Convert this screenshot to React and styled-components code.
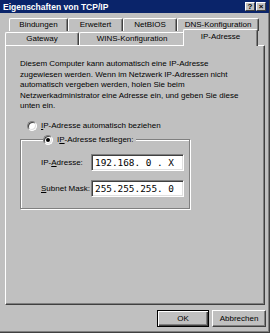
import React from 'react';
import styled, { createGlobalStyle } from 'styled-components';

const GlobalStyle = createGlobalStyle`
  body {
    margin: 0;
    background: #c0c0c0;
    font-family: "Liberation Sans", Arial, sans-serif;
  }
`;

const Window = styled.div`
  width: 270px;
  height: 333px;
  box-sizing: border-box;
  background: #c0c0c0;
  border-right: 1px solid #404040;
  border-bottom: 1px solid #404040;
  box-shadow: inset -1px -1px #808080;
  display: flex;
  flex-direction: column;
`;

const TitleBar = styled.div`
  height: 14px;
  background: #0a246a;
  color: #fff;
  display: flex;
  align-items: center;
  justify-content: space-between;
  padding: 0 3px;
  font-weight: bold;
  font-size: 8.5px;
`;

const TitleButtons = styled.div`
  display: flex;
  gap: 1px;
`;

const TitleButton = styled.div`
  width: 10px;
  height: 9px;
  box-sizing: border-box;
  background: #c0c0c0;
  border-top: 1px solid #fff;
  border-left: 1px solid #fff;
  border-right: 1px solid #404040;
  border-bottom: 1px solid #404040;
  color: #000;
  font-size: 8px;
  font-weight: bold;
  line-height: 7px;
  text-align: center;
`;

const Body = styled.div`
  flex: 1;
  display: flex;
  flex-direction: column;
  padding: 5px 4px 5px 5px;
`;

const TabRow = styled.div`
  display: flex;
  align-items: flex-end;
  height: ${p => p.$h}px;
  padding-left: ${p => p.$indent}px;
`;

const Tab = styled.div`
  position: relative;
  z-index: ${p => (p.$selected ? 2 : 1)};
  width: ${p => p.$w}px;
  height: ${p => (p.$selected ? 17 : 13)}px;
  margin: 0 ${p => (p.$selected ? -2 : 0)}px ${p => (p.$selected ? -1 : 0)}px;
  box-sizing: border-box;
  background: #c0c0c0;
  border-top: 1px solid #fff;
  border-left: 1px solid #fff;
  border-right: 1px solid #404040;
  border-radius: 2px 2px 0 0;
  box-shadow: inset -1px 0 #808080;
  font-size: 8px;
  line-height: 11px;
  padding-top: ${p => (p.$selected ? 1 : 0)}px;
  text-align: center;
  color: #000;
  white-space: nowrap;
`;

const Panel = styled.div`
  height: 260px;
  box-sizing: border-box;
  border-top: 1px solid #fff;
  border-left: 1px solid #fff;
  border-right: 1px solid #404040;
  border-bottom: 1px solid #404040;
  box-shadow: inset -1px -1px #808080;
  padding: 13px 14px;
  font-size: 8px;
  color: #000;
`;

const Intro = styled.p`
  margin: 0;
  line-height: 10.5px;
`;

const RadioRow = styled.label`
  display: flex;
  align-items: center;
  gap: 4px;
  height: 12px;
  margin: ${p => p.$mt || 0}px 0 0 ${p => p.$ml || 0}px;
  background: #c0c0c0;
`;

const RadioDot = styled.span`
  width: 10px;
  height: 10px;
  box-sizing: border-box;
  border-radius: 50%;
  background: #fff;
  border: 1px solid;
  border-color: #808080 #fff #fff #808080;
  box-shadow: inset 1px 1px #404040, inset -1px -1px #dfdfdf;
  display: flex;
  align-items: center;
  justify-content: center;
  &::after {
    content: '';
    width: 4px;
    height: 4px;
    border-radius: 50%;
    background: ${p => (p.$checked ? '#000' : 'transparent')};
  }
`;

const Group = styled.fieldset`
  width: 170px;
  height: 75px;
  box-sizing: border-box;
  margin: 2px 0 0 0;
  padding: 8px 0 0 20px;
  border: 1px solid #808080;
  box-shadow: inset 1px 1px #fff, 1px 1px #fff;
`;

const Legend = styled.legend`
  padding: 0 2px 0 0;
  margin-left: 2px;
  background: #c0c0c0;
`;

const FieldGrid = styled.div`
  display: grid;
  grid-template-columns: 50px 93px;
  row-gap: 9px;
  align-items: center;
`;

const Input = styled.div`
  height: 17px;
  box-sizing: border-box;
  background: #fff;
  border: 1px solid;
  border-color: #808080 #fff #fff #808080;
  box-shadow: inset 1px 1px #404040, inset -1px -1px #dfdfdf;
  font-family: "DejaVu Sans Mono", "Liberation Mono", monospace;
  font-size: 9.4px;
  line-height: 15px;
  padding-left: 3px;
  white-space: pre;
  overflow: hidden;
`;

const ButtonRow = styled.div`
  display: flex;
  justify-content: flex-end;
  gap: 3px;
  margin-top: 5px;
  margin-right: -1px;
`;

const Button = styled.button`
  width: ${p => p.$w}px;
  height: 17px;
  box-sizing: border-box;
  padding: 0;
  background: #c0c0c0;
  font-family: "Liberation Sans", Arial, sans-serif;
  font-size: 8px;
  color: #000;
  border: 1px solid;
  border-color: ${p => (p.$default ? '#000' : '#fff #404040 #404040 #fff')};
  box-shadow: ${p =>
    p.$default
      ? 'inset 1px 1px #fff, inset -1px -1px #404040, inset -2px -2px #808080'
      : 'inset -1px -1px #808080'};
`;

const tabsBack = [
  { label: 'Bindungen', w: 59 },
  { label: 'Erweitert', w: 55 },
  { label: 'NetBIOS', w: 54 },
  { label: 'DNS-Konfiguration', w: 82 },
];

const tabsFront = [
  { label: 'Gateway', w: 74 },
  { label: 'WINS-Konfiguration', w: 106 },
  { label: 'IP-Adresse', w: 75, selected: true },
];

export default function App() {
  return (
    <>
      <GlobalStyle />
      <Window>
        <TitleBar>
          <span>Eigenschaften von TCP/IP</span>
          <TitleButtons>
            <TitleButton>?</TitleButton>
            <TitleButton>×</TitleButton>
          </TitleButtons>
        </TitleBar>
        <Body>
          <TabRow $h={13} $indent={4}>
            {tabsBack.map(t => (
              <Tab key={t.label} $w={t.w}>{t.label}</Tab>
            ))}
          </TabRow>
          <TabRow $h={14} $indent={0}>
            {tabsFront.map(t => (
              <Tab key={t.label} $w={t.w} $selected={t.selected}>{t.label}</Tab>
            ))}
          </TabRow>
          <Panel>
            <Intro>
              Diesem Computer kann automatisch eine IP-Adresse<br />
              zugewiesen werden. Wenn im Netzwerk IP-Adressen nicht<br />
              automatisch vergeben werden, holen Sie beim<br />
              Netzwerkadministrator eine Adresse ein, und geben Sie diese<br />
              unten ein.
            </Intro>
            <RadioRow $mt={8} $ml={7}>
              <RadioDot />
              <span><u>I</u>P-Adresse automatisch beziehen</span>
            </RadioRow>
            <Group>
              <Legend>
                <RadioRow>
                  <RadioDot $checked />
                  <span>I<u>P</u>-Adresse festlegen:</span>
                </RadioRow>
              </Legend>
              <FieldGrid>
                <span>IP-<u>A</u>dresse:</span>
                <Input>192.168. 0 . X</Input>
                <span><u>S</u>ubnet Mask:</span>
                <Input>255.255.255. 0</Input>
              </FieldGrid>
            </Group>
          </Panel>
          <ButtonRow>
            <Button $w={52} $default>OK</Button>
            <Button $w={54}>Abbrechen</Button>
          </ButtonRow>
        </Body>
      </Window>
    </>
  );
}
